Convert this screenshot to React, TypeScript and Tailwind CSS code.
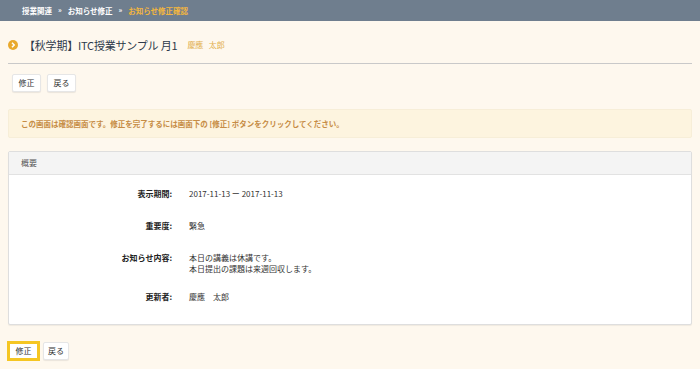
import React from 'react';

const font = { fontFamily: '"Noto Sans CJK JP", "Liberation Sans", sans-serif' };

export default function App() {
    const rows = [
        { label: '表示期間:', value: ['2017-11-13 ー 2017-11-13'] },
        { label: '重要度:', value: ['緊急'] },
        { label: 'お知らせ内容:', value: ['本日の講義は休講です。', '本日提出の課題は来週回収します。'] },
        { label: '更新者:', value: ['慶應　太郎'] },
    ];

    return (
        <div className="w-[700px] h-[369px] bg-[#fef8ee] overflow-hidden" style={font}>
            {/* パンくず */}
            <div className="h-[21px] bg-[#6f7e8e] flex items-center pl-[22px] text-[7.5px] font-bold text-white gap-[6px]">
                <span>授業関連</span>
                <span className="text-[7px]">»</span>
                <span>お知らせ修正</span>
                <span className="text-[7px]">»</span>
                <span className="text-[#f3b63f]">お知らせ修正確認</span>
            </div>

            <div className="px-[8px]">
                {/* タイトル */}
                <div className="flex items-center h-[43px] pt-[6px] border-b border-[#c9c9c9]">
                    <svg width="10" height="10" viewBox="0 0 10 10" className="mr-[6px]">
                        <circle cx="5" cy="5" r="5" fill="#e9a92c" />
                        <path d="M4 2.8 L6.2 5 L4 7.2" stroke="#fff" strokeWidth="1.5" fill="none" />
                    </svg>
                    <span className="text-[11px] text-[#2d3a4a] tracking-[-0.2px]">【秋学期】ITC授業サンプル 月1</span>
                    <span className="ml-[10px] text-[8px] text-[#e2b04f]">慶應&nbsp;&nbsp;&nbsp;太郎</span>
                </div>

                <div className="flex gap-[6px] mt-[10px] ml-[4px]">
                    <button className="h-[18px] w-[29px] bg-white border border-[#e6e6e6] rounded-[2px] text-[8px] text-[#333] shadow-[0_1px_1px_rgba(0,0,0,0.08)]">修正</button>
                    <button className="h-[18px] w-[29px] bg-white border border-[#e6e6e6] rounded-[2px] text-[8px] text-[#333] shadow-[0_1px_1px_rgba(0,0,0,0.08)]">戻る</button>
                </div>

                {/* 確認メッセージ */}
                <div className="mt-[17px] h-[29px] bg-[#fdf4df] border border-[#f7eed8] rounded-[2px] flex items-center pl-[12px] text-[7.5px] font-bold text-[#c68c45]">
                    この画面は確認画面です。修正を完了するには画面下の [修正] ボタンをクリックしてください。
                </div>

                {/* 概要 */}
                <div className="mt-[13px] h-[174px] bg-white border border-[#dedede] rounded-[2px] shadow-[0_1px_1px_rgba(0,0,0,0.06)]">
                    <div className="h-[23px] bg-[#f4f4f4] border-b border-[#e2e2e2] flex items-center pl-[12px] text-[8px] text-[#555]">概要</div>
                    <div className="pt-[13px]">
                        {rows.map((r) => (
                            <div key={r.label} className={`flex ${r.value.length > 1 ? 'h-[39px]' : 'h-[32px]'}`}>
                                <div className="w-[163px] text-right text-[8px] font-bold text-[#222] leading-[11px]">{r.label}</div>
                                <div className="ml-[17px] text-[8px] text-[#333] leading-[11px]">
                                    {r.value.map((v) => <div key={v}>{v}</div>)}
                                </div>
                            </div>
                        ))}
                    </div>
                </div>

                <div className="flex gap-[3px] mt-[16px] -ml-[1px]">
                    <button className="h-[20px] w-[33px] bg-white border-[3px] border-[#f5c623] text-[8px] text-[#333]">修正</button>
                    <button className="h-[18px] w-[26px] mt-[1px] bg-white border border-[#e6e6e6] rounded-[2px] text-[8px] text-[#333] shadow-[0_1px_1px_rgba(0,0,0,0.08)]">戻る</button>
                </div>
            </div>
        </div>
    );
}
